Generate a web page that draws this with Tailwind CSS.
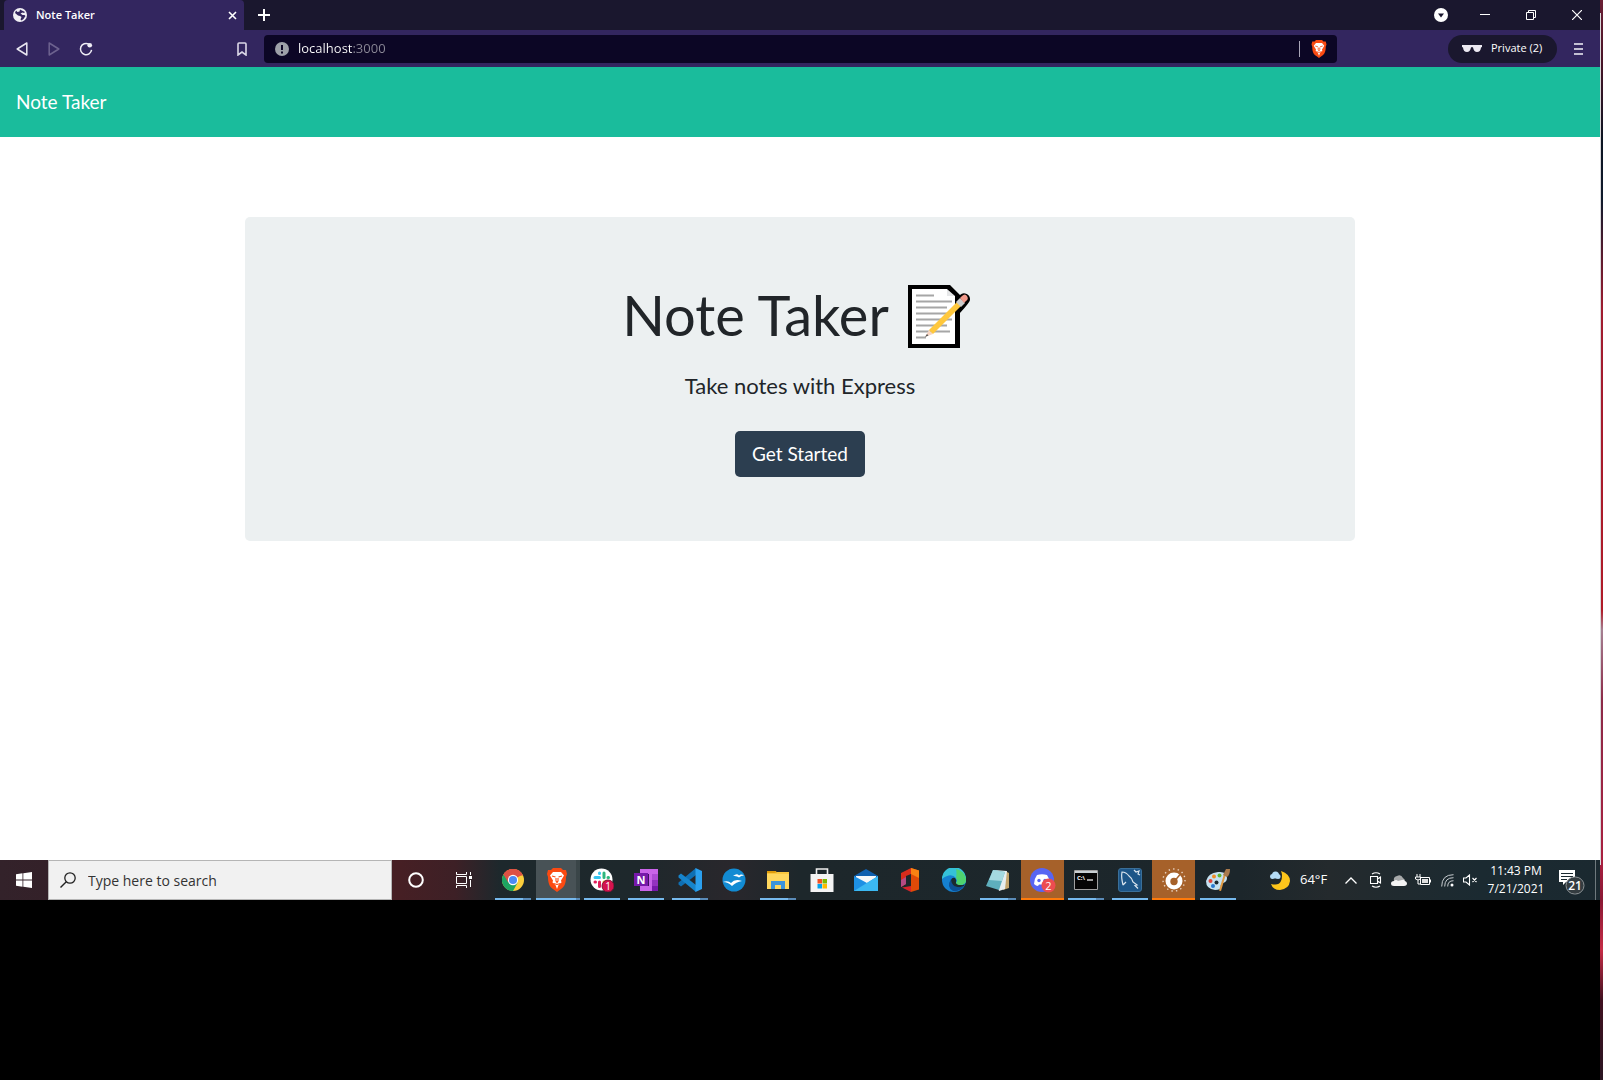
<!DOCTYPE html>
<html lang="en">
<head>
<meta charset="utf-8">
<title>Note Taker</title>
<script src="https://cdn.jsdelivr.net/npm/@tailwindcss/browser@4"></script>
</head>
<body class="flex min-h-screen bg-black font-['Open_Sans',sans-serif]">
<svg class="hidden">
  <symbol id="lion" viewBox="0 0 20 24">
    <path fill="#fb4a12" d="M6 0h8l2 2 3 0 1 4-1 3c0 7-2 10-5 12l-4 3-4-3C3 19 1 16 1 9L0 6l1-4 3 0z"/>
    <path fill="#fff" d="M6 4h8l3 3.500-3 5 .5 2-3 2.500L10 21l-1.500-4-3-2.500.5-2-3-5z"/>
    <path fill="none" stroke="#fb4a12" stroke-width="1.100" d="M5 8l3.500 1M15 8l-3.500 1M9 10v3l1 1.500 1-1.500v-3M6.500 15.500L10 16.500l3.500-1"/>
  </symbol>
</svg>

<div class="flex min-w-0 flex-1 flex-col">
  <!-- Browser tabs -->
  <header class="flex h-[30px] shrink-0 items-center bg-[#1a172e] pl-1 text-white">
    <div class="flex h-full w-60 items-center rounded-t bg-[#33265f] pr-[7px] pl-[9px]">
      <svg class="size-[14px]" viewBox="0 0 14 14"><circle cx="7" cy="7" r="7" fill="#f1f0f5"/><path fill="#33265f" d="M7 1.500L12 4l-1 1-1.500-.5-2 1 2 1.500 2 0 1 1-2 3-2 1.500-1-1 1-2.500-1.500-1-2-.5-3-2.500 1-2.500 1.500 1.500 2-.5z"/></svg>
      <span class="ml-[9px] flex-1 text-[11px] font-semibold">Note Taker</span>
      <button aria-label="Close tab"><svg class="size-[9px]" viewBox="0 0 9 9"><path d="M1 1l7 7M8 1L1 8" stroke="#fff" stroke-width="1.600"/></svg></button>
    </div>
    <button class="ml-[14px]" aria-label="New tab"><svg class="size-3" viewBox="0 0 12 12"><path d="M6 0v12M0 6h12" stroke="#fff" stroke-width="2"/></svg></button>
    <div class="ml-auto flex items-center">
      <button class="grid w-[42px] place-items-center" aria-label="Search tabs"><svg class="size-[14px]" viewBox="0 0 14 14"><circle cx="7" cy="7" r="7" fill="#fff"/><path d="M4 5.500h6L7 9.500z" fill="#1a172e"/></svg></button>
      <button class="grid w-[46px] place-items-center" aria-label="Minimize"><svg class="size-[10px]" viewBox="0 0 10 10"><path d="M0 4.500h10" stroke="#fff"/></svg></button>
      <button class="grid w-[46px] place-items-center" aria-label="Restore"><svg class="size-[10px]" viewBox="0 0 10 10"><path d="M.5 2.500h7v7h-7zM2.500 2.500v-2h7v7h-2" stroke="#fff" fill="none"/></svg></button>
      <button class="grid w-[46px] place-items-center" aria-label="Close"><svg class="size-[10px]" viewBox="0 0 10 10"><path d="M0 0l10 10M10 0L0 10" stroke="#fff" stroke-width="1.200"/></svg></button>
    </div>
  </header>

  <!-- Address bar -->
  <div class="flex h-[37px] shrink-0 items-center bg-[#33265f] pr-4 pl-4 text-white">
    <button aria-label="Back"><svg class="h-[14px] w-3" viewBox="0 0 12 14"><path d="M10.800 1v12L1.200 7z" fill="none" stroke="#e8e5f0" stroke-width="1.500" stroke-linejoin="round"/></svg></button>
    <button class="ml-5" aria-label="Forward"><svg class="h-[14px] w-3" viewBox="0 0 12 14"><path d="M1.200 1v12l9.600-6z" fill="none" stroke="#6d628f" stroke-width="1.500" stroke-linejoin="round"/></svg></button>
    <button class="ml-[19px]" aria-label="Reload"><svg class="size-[14px]" viewBox="0 0 15 15"><path d="M10.500 2.300A6 6 0 1 0 13.500 8.500" fill="none" stroke="#efedf5" stroke-width="1.600"/><circle cx="11.500" cy="3.500" r="2.500" fill="#efedf5"/></svg></button>
    <button class="ml-36" aria-label="Bookmark"><svg class="h-[14px] w-[10px]" viewBox="0 0 10 14"><path d="M1 2q0-1 1-1h6q1 0 1 1v11l-4-3-4 3z" fill="none" stroke="#dcd8e8" stroke-width="1.600"/></svg></button>
    <div class="ml-[17px] flex h-7 flex-1 items-center rounded bg-[#0c0625] pr-[10px] pl-[11px]">
      <svg class="size-[14px] shrink-0" viewBox="0 0 14 14"><circle cx="7" cy="7" r="7" fill="#9da0a8"/><path d="M7 3v5M7 9.500v2" stroke="#0c0625" stroke-width="2"/></svg>
      <input aria-label="Address" value="localhost:3000" class="ml-[9px] min-w-0 flex-1 bg-[linear-gradient(90deg,#fff_55px,#8b8896_55px)] bg-clip-text text-[13px] text-transparent outline-none">
      <span class="h-4 w-px bg-[#a9a5b8]"></span>
      <svg class="ml-[11px] h-[18px] w-4"><use href="#lion"/></svg>
    </div>
    <button class="ml-[111px] flex h-7 w-[109px] items-center rounded-full bg-[#1a172e] pl-[14px] text-[11px] font-medium whitespace-nowrap"><svg class="mr-[9px] h-2 w-5 shrink-0" viewBox="0 0 20 8"><path d="M0 0h20v2l-1 .5Q18.500 7 15 7q-3 0-4-4.500-1-.8-2 0Q8 7 5 7 1.500 7 1 2.500L0 2z" fill="#ece9f2"/></svg>Private (2)</button>
    <button class="ml-4" aria-label="Menu"><svg class="h-3 w-[11px]" viewBox="0 0 11 12"><path d="M1 1h9M1 6h9M1 11h9" stroke="#c3bfd2" stroke-width="1.800"/></svg></button>
  </div>

  <!-- Page -->
  <nav class="flex h-[70px] shrink-0 items-center bg-[#1abc9c] px-4 font-['Lato',sans-serif]">
    <a href="#" class="text-[19px] text-white">Note Taker</a>
  </nav>
  <main class="bg-white px-4 pt-20 pb-[319px] font-['Lato',sans-serif] text-[#212529]">
    <section class="mx-auto flex max-w-[1110px] flex-col items-center rounded-[5px] bg-[#ecf0f1] px-8 py-16 text-center">
      <h1 class="flex h-[67px] items-center gap-[19px] pr-[6px] text-[56px] leading-[67px]">Note Taker
        <svg class="mt-1 h-16 w-[64px]" viewBox="0 0 64 64" role="img" aria-label="Memo">
          <path d="M0 0h42l10 10a6 6 0 0 1 10 5q0 2-10 13v35H0z" fill="#000"/>
          <path d="M4 4h35v7h8v48H4z" fill="#fff"/><path d="M39 4l8 7h-8z" fill="#e6e7e8"/>
          <path d="M8 10.500h18M8 16.500h36M8 22.500h31M8 28.500h34M8 34.500h36M8 40.500h31M8 46.500h34M8 52.500h10" stroke="#a6a6a6" stroke-width="2"/>
          <path d="M17 52l4-7 4 4z" fill="#f7d5c2"/><path d="M17 52l2-3 1.500 1.500z" fill="#555"/>
          <path d="M21 45l30-30 4 4-30 30z" fill="#ffc83d"/><path d="M48 17l4-4 5 5-4 4z" fill="#ccc"/><path d="M52 13l2-2q3-3 5 0 2 3-1 5l-2 2z" fill="#f29a8b"/>
        </svg>
      </h1>
      <h4 class="mt-5 mb-7 text-[22px] leading-[35px]">Take notes with Express</h4>
      <a href="#" class="flex h-[46px] w-[130px] items-center justify-center rounded-[5px] bg-[#2c3e50] text-[19px] text-white">Get Started</a>
    </section>
  </main>

  <!-- Taskbar -->
  <footer class="flex h-10 shrink-0 items-center bg-[linear-gradient(90deg,#33222a_0,#351f27_130px,#461f24_400px,#3d2026_455px,#1d282c_500px,#1e282c_640px,#29272c_730px,#1d272b_800px,#1c262b_1240px,#242a2d_1330px,#1b2a31_1480px,#1b2930_100%)] text-white">
    <button class="grid w-12 shrink-0 place-items-center" aria-label="Start"><svg class="size-4" viewBox="0 0 16 16"><path fill="#fff" d="M0 2.200l6.500-.9v6.200H0zM7.300 1.200L16 0v7.500H7.300zM0 8.400h6.500v6.300L0 13.800zM7.300 8.400H16V16l-8.700-1.200z"/></svg></button>
    <label class="flex h-10 w-[344px] shrink-0 items-center border border-[#b5b5b5] bg-[#f1f1f1] pl-[11px]">
      <svg class="size-4 shrink-0" viewBox="0 0 16 16"><circle cx="10" cy="6" r="5.200" fill="none" stroke="#222" stroke-width="1.300"/><path d="M6.300 9.700L.5 15.500" stroke="#222" stroke-width="1.400"/></svg>
      <input aria-label="Search" placeholder="Type here to search" class="ml-3 min-w-0 flex-1 text-[14px] text-[#333] outline-none placeholder:text-[#333]">
    </label>
    <button class="grid w-12 shrink-0 place-items-center" aria-label="Cortana"><svg class="size-4" viewBox="0 0 16 16"><circle cx="8" cy="8" r="6.800" fill="none" stroke="#fff" stroke-width="2"/></svg></button>
    <button class="grid w-12 shrink-0 place-items-center" aria-label="Task view"><svg class="size-4" viewBox="0 0 16 16"><path d="M.5 0v2.500h10V0M.5 16v-2.500h10V16M.5 4.500h10v7H.5zM14.500 0v3M14.500 8v7" fill="none" stroke="#fff"/><path d="M13 4h3v3h-3z" fill="#fff"/></svg></button>

    <div class="ml-[3px] flex h-10 shrink-0">
      <button class="relative grid w-[45px] place-items-center pr-px" aria-label="Chrome"><svg class="size-[22px]" viewBox="0 0 24 24"><circle cx="12" cy="12" r="12" fill="#fbce3c"/><path d="M12 12L1.600 6A12 12 0 0 1 22.400 6z" fill="#dd5144"/><path d="M12 12l-10.400-6A12 12 0 0 0 12 24l5-9z" fill="#1da462"/><path d="M12 7h10.800a12 12 0 0 0-21.200-1l5.400 9z" fill="#dd5144"/><circle cx="12" cy="12" r="5.600" fill="#fff"/><circle cx="12" cy="12" r="4.400" fill="#4b8bf5"/></svg><i class="absolute bottom-0 left-1 h-[2px] w-9 border-r-8 border-[#5a8bb8] bg-[#76b9ed]"></i></button>
      <button class="relative grid w-11 place-items-center border-r-4 border-[#3a4548] bg-[#485256]" aria-label="Brave"><svg class="ml-[2px] h-6 w-5"><use href="#lion"/></svg><i class="absolute bottom-0 left-0 h-[2px] w-11 border-r-4 border-[#5a8bb8] bg-[#76b9ed]"></i></button>
      <button class="relative grid w-11 place-items-center" aria-label="Slack"><svg class="size-6" viewBox="0 0 24 24"><circle cx="11.500" cy="11.500" r="11" fill="#fff"/><g stroke-width="3" stroke-linecap="round"><path d="M5 9.500h4.500M9.500 5v.5" stroke="#36c5f0"/><path d="M14 5v4.500M18 9.500h.5" stroke="#2eb67d"/><path d="M5 14h.500M9.500 14v4.500" stroke="#e01e5a"/><path d="M14 14h4.500" stroke="#ecb22e"/></g><circle cx="18" cy="18" r="6" fill="#d5144e" stroke="#7d1235"/><text x="18" y="21.500" text-anchor="middle" font-size="10" fill="#fff">1</text></svg><i class="absolute bottom-0 left-1 h-[2px] w-9 bg-[#76b9ed]"></i></button>
      <button class="relative grid w-11 place-items-center" aria-label="OneNote"><svg class="size-6" viewBox="0 0 24 24"><path d="M6 1h18v22H6z" fill="#ca64ea"/><path d="M18 6h6v6h-6z" fill="#ae4bd5"/><path d="M18 12h6v6h-6z" fill="#9332bf"/><path d="M18 18h6v5h-6z" fill="#7719aa"/><path d="M6 6h9v12H6z" fill="#401060"/><path d="M0 5h14v13H0z" fill="#7719aa"/><text x="7" y="15.500" text-anchor="middle" font-size="11" font-weight="700" fill="#fff">N</text></svg><i class="absolute bottom-0 left-1 h-[2px] w-9 bg-[#76b9ed]"></i></button>
      <button class="relative grid w-11 place-items-center" aria-label="Visual Studio Code"><svg class="size-6" viewBox="0 0 24 24"><path d="M18 0v7L3 18.500.500 16.500v-2z" fill="#0f6fb3"/><path d="M18 24v-7L3 5.500.500 7.500v2z" fill="#1684cc"/><path d="M17.500 0L24 3v18l-6.500 3z" fill="#2ba0ee"/></svg><i class="absolute bottom-0 left-1 h-[2px] w-9 border-r-8 border-[#5a8bb8] bg-[#76b9ed]"></i></button>
      <button class="grid w-11 place-items-center" aria-label="OpenOffice"><svg class="size-6" viewBox="0 0 24 24"><circle cx="12" cy="12" r="11.500" fill="#128bd3"/><path d="M11 8q4-3 6-.500 2-2 5 0-3 0-5 2-2-2-6-1.500zM1 14q5-2 8 1 4-5 11-2-6 1-10 5-4-4-9-4z" fill="#fff"/></svg></button>
      <button class="relative grid w-11 place-items-center" aria-label="File Explorer"><svg class="size-6" viewBox="0 0 24 24"><path d="M1 3h9l1 2h12v6H1z" fill="#e09c0a"/><path d="M1 5h22v16H1z" fill="#ffd75e"/><path d="M1 5h8l2-1h12v2H1z" fill="#f9c73f"/><path d="M5 21v-8h14v8h-4v-4H9v4z" fill="#3b94dc"/></svg><i class="absolute bottom-0 left-1 h-[2px] w-9 border-r-8 border-[#5a8bb8] bg-[#76b9ed]"></i></button>
      <button class="grid w-11 place-items-center" aria-label="Microsoft Store"><svg class="size-6" viewBox="0 0 24 24"><path d="M6.500 7V1h11v6" fill="none" stroke="#eee" stroke-width="1.600"/><path d="M.5 6h23v18H.5z" fill="#f4f4f4"/><path d="M7.500 11H12v4.500H7.500z" fill="#f25022"/><path d="M12.500 11H17v4.500h-4.500z" fill="#7fba00"/><path d="M7.500 16H12v4.500H7.500z" fill="#00a4ef"/><path d="M12.500 16H17v4.500h-4.500z" fill="#ffb900"/></svg></button>
      <button class="grid w-11 place-items-center" aria-label="Mail"><svg class="size-6" viewBox="0 0 24 24"><path d="M0 8l12-7 12 7v4H0z" fill="#0f5fae"/><path d="M2 8h20v8H2z" fill="#f6f7f8"/><path d="M0 8l13 7 11-7v15H0z" fill="#1e90e4"/><path d="M24 8L0 23h24z" fill="#3bb8f2"/></svg></button>
      <button class="grid w-11 place-items-center" aria-label="Office"><svg class="size-6" viewBox="0 0 24 24"><path d="M3 5l10-5v6L8 8v8l-5 3z" fill="#d92c1c"/><path d="M3 12l5-3v7l-5 3z" fill="#b54a83"/><path d="M4 19.500l9-1.500v6z" fill="#d8232a"/><path d="M13 0l8 2.500v19L13 24z" fill="#e04a08"/><path d="M13 0l8 2.500V10l-8-4z" fill="#f98212"/></svg></button>
      <button class="grid w-11 place-items-center" aria-label="Edge"><svg class="size-6" viewBox="0 0 24 24"><circle cx="12" cy="12" r="12" fill="#1580d0"/><path d="M0 11A12 12 0 0 1 24 11q.5 6-6 6-4 0-4-2 2-2 0-5-5-6-14 1z" fill="#35c1d8"/><path d="M14 1a12 12 0 0 1 10 10q.500 6-6 6-4 0-4-2 2-2 0-5 1-5 0-9z" fill="#4fd36f"/><path d="M9 11q-5 8 2 12 7 1 11-5-8 3-11-2-1-2-2-5z" fill="#0c4f96"/><path d="M14 15q1-3-1-5-3-1-4 2 1 6 6 7 4 .5 7-1l1-1.500q-8 1.500-9-1.500z" fill="#1b2930"/></svg></button>
      <button class="relative grid w-11 place-items-center" aria-label="Notepad"><svg class="size-6" viewBox="0 0 24 24"><path d="M19 3l4 2v15l-6 2z" fill="#c4a56d"/><path d="M8 2l13 1-2 18-6 2z" fill="#e7eef0"/><path d="M7 2l12 2-6 18L0 18z" fill="#5eafbd"/><path d="M7 2l12 2-3 9L3 12z" fill="#a5d9e0"/></svg><i class="absolute bottom-0 left-1 h-[2px] w-9 border-r-8 border-[#5a8bb8] bg-[#76b9ed]"></i></button>
      <button class="ml-px grid w-[43px] place-items-center border-b-2 border-[#ff7a0a] bg-[#a6612a]" aria-label="Discord"><svg class="mt-[2px] size-[26px]" viewBox="0 0 26 26"><circle cx="12" cy="13" r="12" fill="#5865f2"/><path d="M7 8q5-1.500 10 0 3 4 3 9-2 2-4 2l-1-1.500H9L8 19q-2 0-4-2 0-5 3-9z" fill="#fff"/><circle cx="9" cy="13.500" r="1.700" fill="#5865f2"/><circle cx="15" cy="13.500" r="1.700" fill="#5865f2"/><circle cx="18.500" cy="18.500" r="7" fill="#ed4c50"/><text x="18.500" y="22.500" text-anchor="middle" font-size="11" fill="#fff">2</text></svg></button>
      <button class="relative grid w-11 place-items-center" aria-label="Command Prompt"><svg class="size-6" viewBox="0 0 24 24"><path d="M.5 2.500h23v19H.5z" fill="#050505" stroke="#a0a0a0"/><path d="M1 3h22v2H1z" fill="#c9d0d4"/><text x="3" y="12" font-size="6" font-weight="700" fill="#fff">C:\</text><path d="M13 12h6" stroke="#fff" stroke-width="1.200"/></svg><i class="absolute bottom-0 left-1 h-[2px] w-9 border-r-8 border-[#5a8bb8] bg-[#76b9ed]"></i></button>
      <button class="relative grid w-11 place-items-center" aria-label="MySQL Workbench"><svg class="size-6" viewBox="0 0 24 24"><rect x=".5" y=".5" width="23" height="23" rx="2.500" fill="#1d5688" stroke="#3a6f99"/><path d="M5 17q-2-8-1-13 4 0 7 4 3 2 4 6l4 3-2 .500 3 3M5 17l3-3M16 2l2 2 3-1-1 3 2 1" fill="none" stroke="#dbe6ee" stroke-width="1.200"/></svg><i class="absolute bottom-0 left-1 h-[2px] w-9 bg-[#76b9ed]"></i></button>
      <button class="grid w-[43px] place-items-center border-b-2 border-[#ff7a0a] bg-[#a6612a]" aria-label="Dial"><svg class="mt-[2px] size-6" viewBox="0 0 24 24"><circle cx="12" cy="12" r="11" fill="none" stroke="#e8d3c2" stroke-width="1.400" stroke-dasharray="1.400 3.200"/><circle cx="12" cy="13" r="8.500" fill="#fff"/><circle cx="12" cy="13.500" r="3.700" fill="#a6612a"/><path d="M13.500 12l4.500-5.500" stroke="#a6612a" stroke-width="1.400"/></svg></button>
      <button class="relative ml-px grid w-11 place-items-center" aria-label="Paint"><svg class="size-6" viewBox="0 0 24 24"><path d="M12 4q9-1 9 6 0 4-4 5-3 1-2 4 0 3-6 3-9-1-9-9 2-8 12-9z" fill="#c5e1f1"/><circle cx="4.500" cy="13" r="2" fill="#e0453c"/><circle cx="8" cy="8.500" r="2" fill="#f08c28"/><circle cx="13.500" cy="7.500" r="2" fill="#62b634"/><circle cx="10.500" cy="14.500" r="2" fill="#1b2930"/><circle cx="7" cy="18" r="2" fill="#2a79d0"/><path d="M20 6l-5 17-2-.500L18 6z" fill="#e09a43"/><path d="M17 7l3-6 4 0q0 6-3 8z" fill="#a8794c"/></svg><i class="absolute bottom-0 left-1 h-[2px] w-9 bg-[#76b9ed]"></i></button>
    </div>

    <div class="ml-auto flex h-10 shrink-0 items-center">
      <svg class="h-[19px] w-5" viewBox="0 0 20 19"><path d="M11 0q9 3 9 10-1 8-10 9-7 0-9-6 8 2 10-3 2-5 0-10z" fill="#fdc51b"/><g fill="#b5dcf5"><circle cx="2.500" cy="5.500" r="2.500"/><circle cx="5.500" cy="4" r="3.500"/><circle cx="8" cy="5.500" r="2.500"/></g></svg>
      <span class="ml-[10px] w-[30px] text-[13px]">64°F</span>
      <svg class="ml-[15px] h-[7px] w-3" viewBox="0 0 12 7"><path d="M.5 6.500L6 1l5.500 5.500" fill="none" stroke="#fff" stroke-width="1.300"/></svg>
      <svg class="ml-[13px] h-4 w-3" viewBox="0 0 12 16"><path d="M.5 4.500h7v7h-7zM7.500 7l3-2v6l-3-2M2 2q4-2.500 8 0M2 14q4 2.500 8 0" fill="none" stroke="#fff" stroke-width="1.100"/></svg>
      <svg class="ml-[9px] h-[11px] w-4" viewBox="0 0 16 11"><path d="M3 6q-1-4 3-5 4-2 6 2l2 2-4 3z" fill="#a7a9aa"/><path d="M3 11q-3 0-3-2.500Q0 6 3 6q2-2 4 0l4-1q2-1 3 1 2 .5 2 2.500T13 11z" fill="#f4f4f4"/></svg>
      <svg class="ml-2 h-3 w-4" viewBox="0 0 16 12"><path d="M5.500 3.500h9v7h-9zM15.500 5.500v3M2 0v3M5 0v3M.5 3h5v2q-2.500 2-5 0zM3 6v4h2" fill="none" stroke="#fff"/><path d="M7 5h6v4H7z" fill="#ddd"/></svg>
      <svg class="ml-[10px] size-[13px]" viewBox="0 0 13 13"><path d="M.7 12.500Q.7.700 12.500.700M3.700 12.500q0-8.800 8.800-8.800M6.700 12.500q0-5.800 5.800-5.800" fill="none" stroke="#c8cdd0"/><circle cx="11" cy="11" r="1.500" fill="#fff"/></svg>
      <svg class="ml-[9px] h-3 w-[15px]" viewBox="0 0 15 12"><path d="M.5 4v4h2.500l3.500 3V1L3 4zM9.500 4l4 4M13.500 4l-4 4" fill="none" stroke="#fff" stroke-width="1.100"/></svg>
      <div class="ml-2 w-[60px] text-center text-[12px] leading-[18px] whitespace-nowrap"><div>11:43 PM</div><div>7/21/2021</div></div>
      <button class="ml-[13px]" aria-label="21 notifications"><svg class="mt-1 h-[25px] w-[26px]" viewBox="0 0 26 25"><path d="M0 0h16v12H7l-3 3v-3H0z" fill="#fff"/><path d="M2 3.500h12M2 6.500h12M2 9.500h6" stroke="#1b2930"/><rect x="7" y="7" width="18" height="17" rx="8.500" fill="#343c40" stroke="#8c9295"/><text x="16" y="20" text-anchor="middle" font-size="12" font-weight="600" fill="#fff">21</text></svg></button>
      <span class="mr-1 ml-[10px] h-10 w-px bg-[#6f797d]"></span>
    </div>
  </footer>
</div>

<!-- Desktop edge beside the window -->
<div class="flex w-[3px] shrink-0 bg-[linear-gradient(#6b1f35_0,#4a1528_60px,#0c1422_140px,#101a2c_200px,#a01c30_310px,#b01b28_610px,#a58092_630px,#8c2a48_700px,#a92040_860px,#8a1834_900px,#c52c46_950px,#401020_1000px,#2a1522_1080px)]">
  <div class="mt-[13px] h-[852px] w-px bg-[#d8d8da]"></div>
</div>
</body>
</html>
